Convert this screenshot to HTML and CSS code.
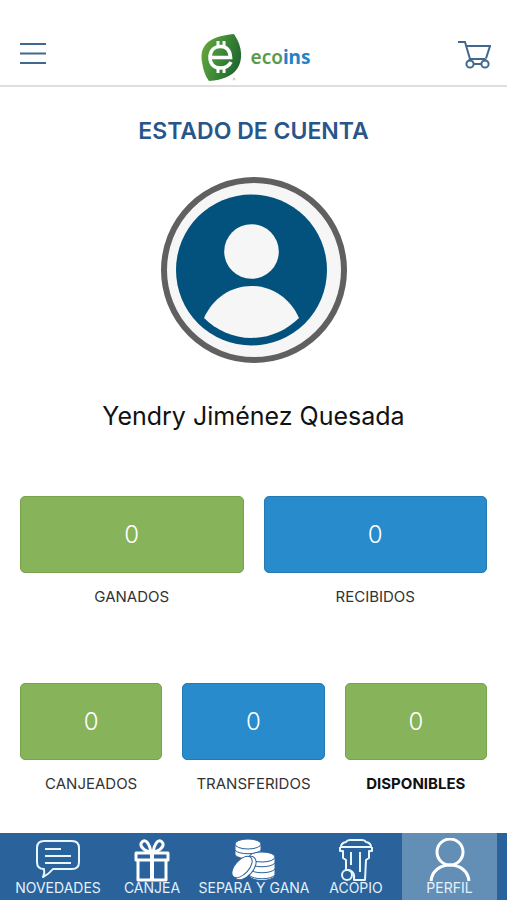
FILE: index.html
```html
<!DOCTYPE html>
<html lang="es">
<head>
    <meta charset="utf-8">
    <meta name="viewport" content="width=device-width, initial-scale=1">
    <title>Estado de cuenta</title>
    <link rel="stylesheet" href="styles.css">
</head>

<body>

<header class="header">
    <button type="button" class="header_button" aria-label="Menú">
        <svg width="26" height="32" viewBox="0 0 26 32"><path d="M0 3h26M0 12.500h26M0 22h26"/></svg>
    </button>
    <a class="logo" href="#">
        <svg width="42" height="48" viewBox="0 0 42 48">
            <defs>
                <linearGradient id="leaf" x1="0" y1="0" x2="1" y2="0.4">
                    <stop offset="0" stop-color="#6fab3c"/>
                    <stop offset="0.5" stop-color="#438f38"/>
                    <stop offset="1" stop-color="#236a30"/>
                </linearGradient>
            </defs>
            <path fill="url(#leaf)" d="M33 1C21 2 11 5 6 10C0 16 0 23 1 29C2 36 4 43 8 48C22 47 31 43 36 36C42 28 42 14 33 1Z"/>
            <g fill="none" stroke="#fff" stroke-width="3.6">
                <path d="M9 24.500H29.500C29 17 25 13.500 19.500 13.500C13 13.500 9 18 9 24.500C9 31 13 35 19.500 35C25 35 28 33 30 29"/>
                <path stroke-width="3" d="M17 8v6M23 8v6M17 35v5M23 35v5"/>
            </g>
            <circle cx="33" cy="46" r="1" fill="none" stroke="#aaa" stroke-width="0.600"/>
        </svg>
        <span class="logo_name"><span class="logo_eco">eco</span>ins</span>
    </a>
    <a class="header_button" href="#" aria-label="Carrito">
        <svg width="34" height="34" viewBox="0 0 34 34">
            <path d="M1 2h7l5 17h15M9 6h24l-4 12.500M28 19l1 2M13 19l-1 2M16 24h9"/>
            <circle cx="13" cy="24" r="3.600"/>
            <circle cx="28" cy="24" r="3.600"/>
        </svg>
    </a>
</header>

<main class="account">
    <h1 class="account_title">ESTADO DE CUENTA</h1>

    <svg class="avatar" width="186" height="186" viewBox="0 0 186 186">
        <circle cx="93" cy="93" r="90" fill="#f6f6f6" stroke="#606060" stroke-width="6"/>
        <circle cx="90.500" cy="93" r="75.500" fill="#03527d"/>
        <circle cx="90.500" cy="74.500" r="27.300" fill="#f6f6f6"/>
        <path fill="#f6f6f6" d="M43 141C52 121 70 109 90.500 109C111 109 129 121 138 141C126 153 109 161 90.500 161C72 161 55 153 43 141Z"/>
    </svg>

    <p class="account_name">Yendry Jiménez Quesada</p>

    <div class="totals totals_two">
        <div class="total">
            <div class="total_box green">0</div>
            <div class="total_label">GANADOS</div>
        </div>
        <div class="total">
            <div class="total_box blue">0</div>
            <div class="total_label">RECIBIDOS</div>
        </div>
    </div>

    <div class="totals totals_three">
        <div class="total">
            <div class="total_box green">0</div>
            <div class="total_label">CANJEADOS</div>
        </div>
        <div class="total">
            <div class="total_box blue">0</div>
            <div class="total_label">TRANSFERIDOS</div>
        </div>
        <div class="total">
            <div class="total_box green">0</div>
            <div class="total_label strong">DISPONIBLES</div>
        </div>
    </div>
</main>

<nav class="tabs">
    <a class="tab" href="#">
        <svg width="44" height="44" viewBox="0 0 44 44">
            <path d="M8 3h28q7 0 7 7v14q0 7-7 7H17q-4 5-10 8q2-4 1-8q-7 0-7-7V10q0-7 7-7ZM9 11h16M9 18h26M9 25h26"/>
        </svg>
        <span>NOVEDADES</span>
    </a>
    <a class="tab" href="#">
        <svg class="heavy" width="36" height="44" viewBox="0 0 36 44">
            <path d="M2 15h32v7H2ZM4 22v20h28V22"/>
            <path stroke-width="4" d="M18 15v27"/>
            <path d="M17 14C9 13 5 7 8 4C12 0 16 7 17 14ZM19 14C27 13 31 7 28 4C24 0 20 7 19 14Z"/>
        </svg>
        <span>CANJEA</span>
    </a>
    <a class="tab" href="#">
        <svg width="46" height="44" viewBox="0 0 46 44">
            <g class="coins">
                <path d="M4 6v11c4 5 22 5 26 0V6Z"/>
                <ellipse cx="17" cy="6" rx="13" ry="5"/>
                <path d="M4 12c3 5 23 5 26 0"/>
                <path d="M18 19v19c4 6 22 6 26 0V19Z"/>
                <path d="M18 25c4 5 22 5 26 0M18 31c4 5 22 5 26 0M18 37c4 5 22 5 26 0"/>
                <ellipse cx="31" cy="19" rx="13" ry="5"/>
                <ellipse cx="14" cy="30" rx="8" ry="14" transform="rotate(42 14 30)"/>
                <ellipse cx="11" cy="29" rx="7" ry="13" transform="rotate(42 11 29)"/>
            </g>
        </svg>
        <span>SEPARA Y GANA</span>
    </a>
    <a class="tab" href="#">
        <svg width="34" height="44" viewBox="0 0 34 44">
            <path d="M2 9q0-4 5-5q1-2 4-2h12q3 0 4 2q5 1 5 5ZM1 9v4h3v7l3 2v10M33 9v4h-3v7l-3 2l-1 20H15v-4M12 14v13M21 14v20M6 32c6-1 10 3 9 8"/>
            <circle cx="8" cy="37" r="5"/>
        </svg>
        <span>ACOPIO</span>
    </a>
    <a class="tab active" href="#" aria-current="page">
        <svg class="heavy" width="42" height="44" viewBox="0 0 42 44">
            <circle cx="21" cy="14" r="13"/>
            <path d="M2 43C3 33 11 27 21 27C31 27 39 33 40 43"/>
        </svg>
        <span>PERFIL</span>
    </a>
</nav>

</body>
</html>
```

FILE: styles.css
```css
* {
    box-sizing: border-box;
}

body {
    display: flex;
    flex-direction: column;
    min-height: 100vh;
    margin: 0;
    background: #fff;
    color: #111;
    font-family: Inter, "Liberation Sans", sans-serif;
}

a {
    color: inherit;
    text-decoration: none;
}

svg {
    display: block;
    flex-shrink: 0;
}

.header {
    display: grid;
    grid-template-columns: 1fr auto 1fr;
    align-items: center;
    height: 87px;
    padding: 28px 16px 0 20px;
    border-bottom: 2px solid #dedede;
}

.header_button {
    padding: 0;
    border: 0;
    background: none;
    justify-self: start;
}

.header_button:last-child {
    justify-self: end;
}

.header_button svg {
    fill: none;
    stroke: #41688f;
    stroke-width: 2;
}

.logo {
    display: flex;
    align-items: center;
    gap: 8px;
}

.logo_name {
    color: #2381c5;
    font: bold 19px/24px "Noto Sans", sans-serif;
}

.logo_eco {
    color: #5a9a4a;
    font-weight: 600;
}

.account {
    padding: 30px 20px 36px;
    text-align: center;
}

.account_title {
    margin: 0 0 32px;
    color: #28558a;
    font-size: 23px;
    font-weight: 600;
    line-height: 28px;
}

.avatar {
    margin: 0 auto;
}

.account_name {
    margin: 37px 0 64px;
    font-size: 25px;
    line-height: 32px;
}

.totals {
    display: grid;
    gap: 20px;
}

.totals_two {
    grid-template-columns: 1fr 1fr;
    margin-bottom: 76px;
}

.totals_three {
    grid-template-columns: 1fr 1fr 1fr;
}

.total_box {
    display: flex;
    align-items: center;
    justify-content: center;
    height: 77px;
    border: 1px solid;
    border-radius: 5px;
    color: #fff;
    font-size: 24px;
    font-weight: 300;
}

.green {
    background: #87b45a;
    border-color: #76a34c;
}

.blue {
    background: #288bcb;
    border-color: #2579b4;
}

.total_label {
    margin-top: 14px;
    color: #333;
    font-size: 15px;
    line-height: 20px;
}

.strong {
    color: #111;
    font-weight: 700;
}

.tabs {
    display: grid;
    grid-template-columns: 96fr 92fr 112fr 92fr 95fr;
    height: 67px;
    margin-top: auto;
    padding: 0 10px;
    background: #2a629b;
}

.tab {
    display: flex;
    flex-direction: column;
    align-items: center;
    padding-top: 5px;
    color: #e4f1fc;
    font-size: 14px;
    line-height: 12px;
    white-space: nowrap;
}

.active {
    background: #638fb7;
}

.tab svg {
    fill: none;
    stroke: #e8f6ff;
    stroke-width: 2;
    stroke-linejoin: round;
}

.tab .heavy {
    stroke: #fff;
    stroke-width: 3;
}

.tab .coins {
    fill: #fff;
    stroke: #2a629b;
    stroke-width: 1;
}
```
